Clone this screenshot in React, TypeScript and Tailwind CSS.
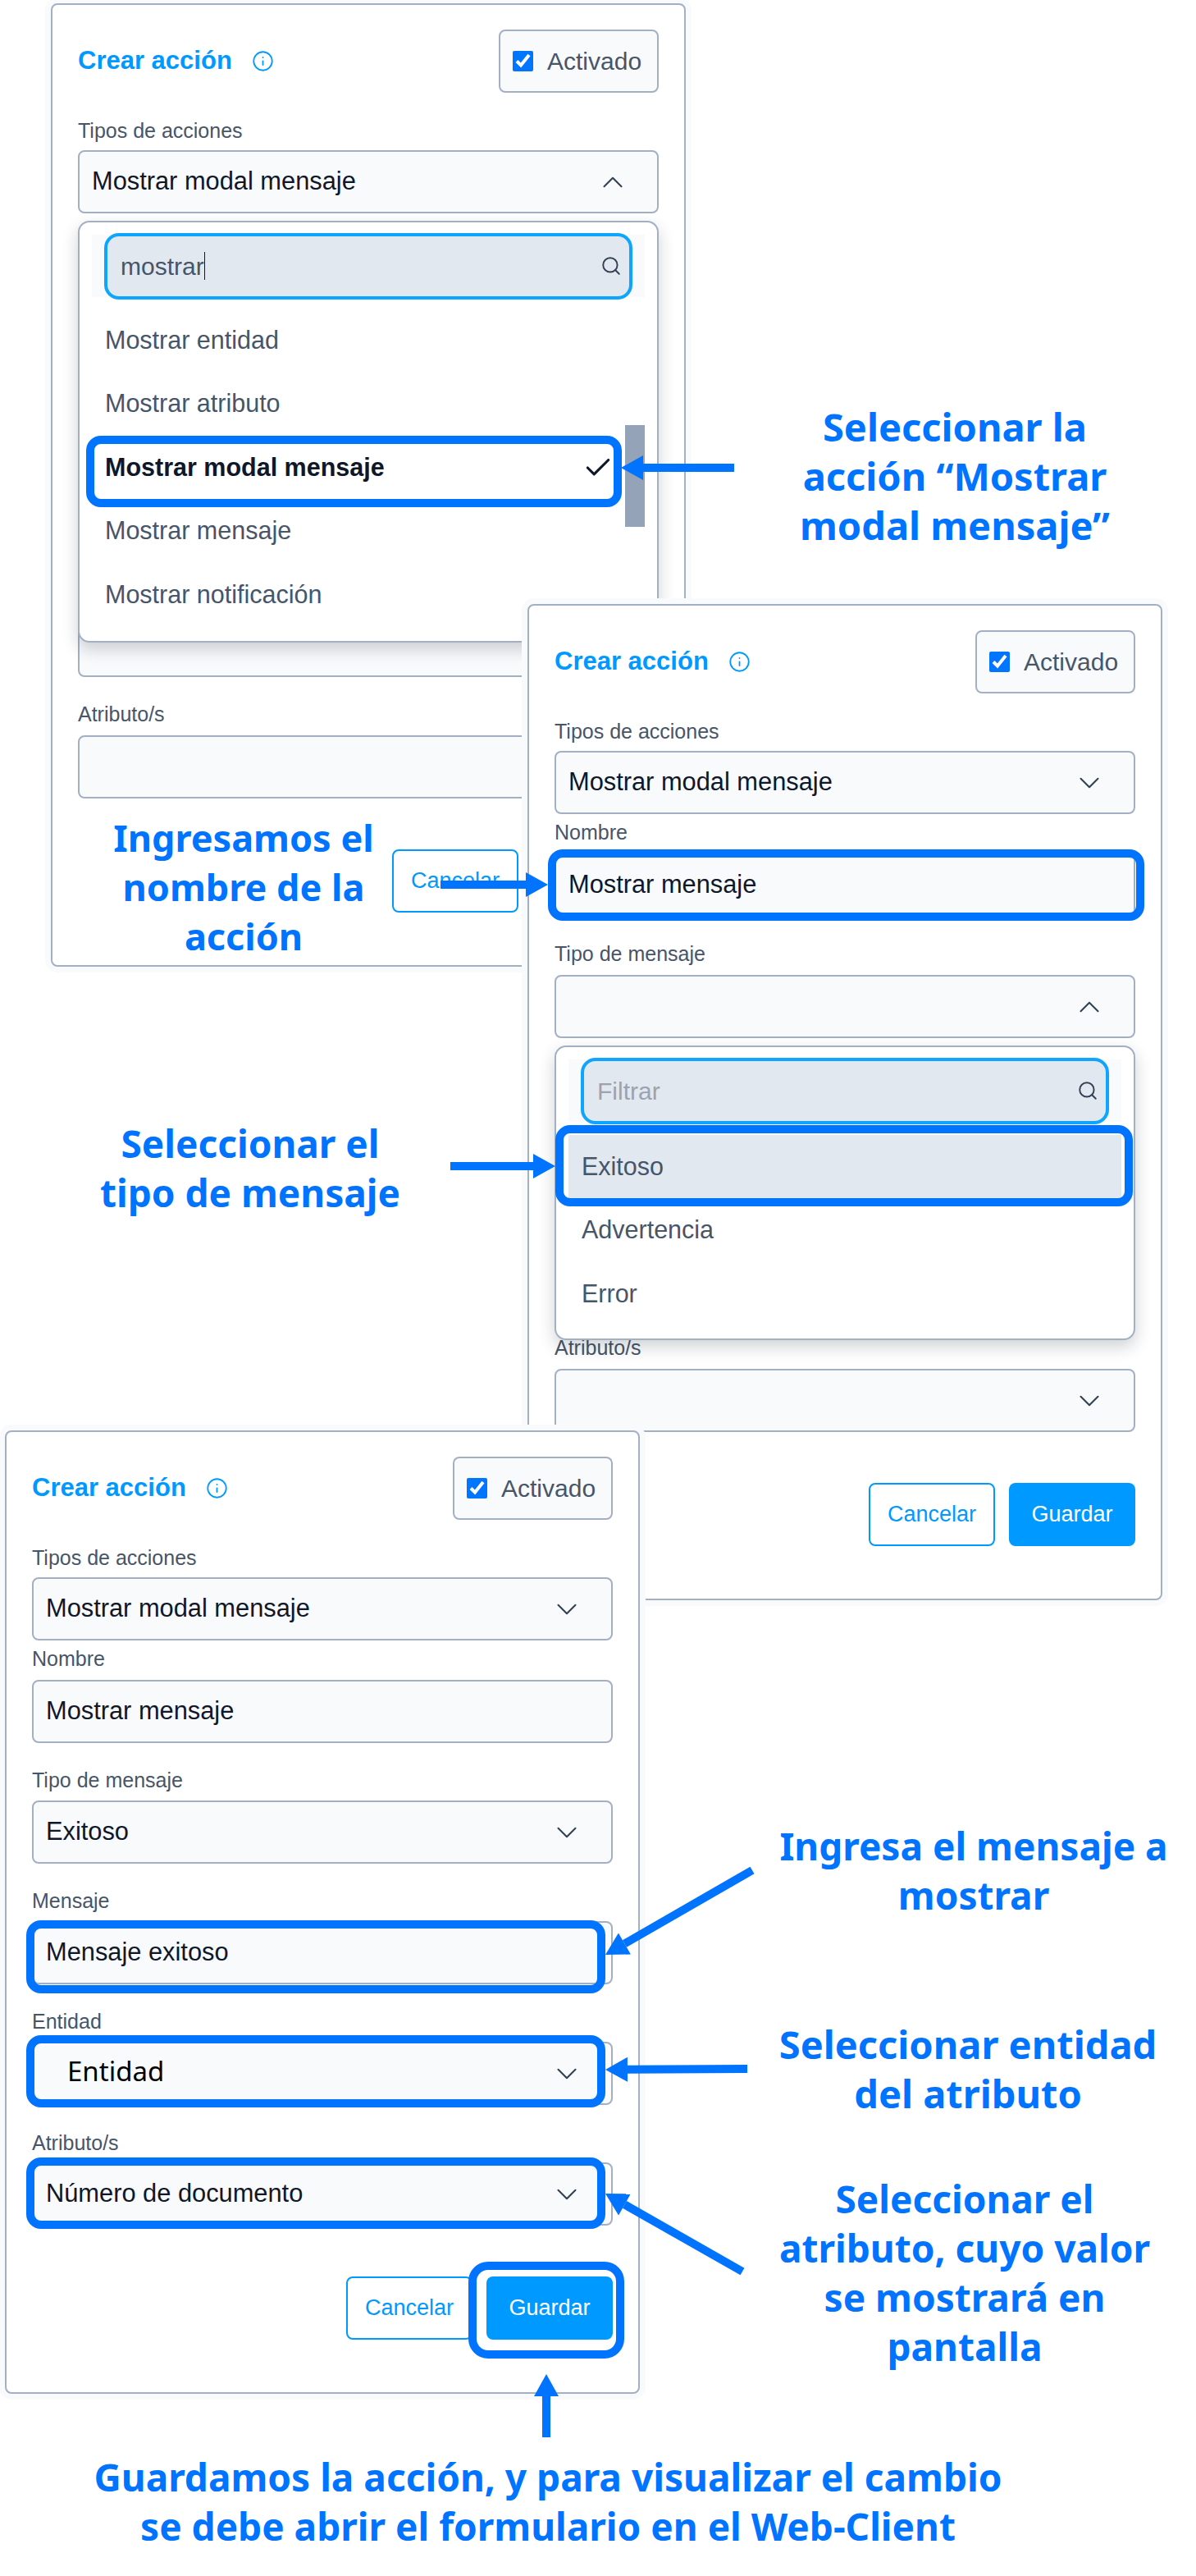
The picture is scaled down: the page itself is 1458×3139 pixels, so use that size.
import { Check, ChevronDown, ChevronUp, Info, Search } from "lucide-react";
import type { ReactNode } from "react";

function Field({ label, className = "mt-[34px]", labelClass = "mb-[13px]", children }: { label: string; className?: string; labelClass?: string; children: ReactNode }) {
    return (
        <div className={`relative ${className}`}>
            <div className={`h-6 flex items-center text-[25px] text-[#475569] ${labelClass}`}>{label}</div>
            {children}
        </div>
    );
}

function Box({ value, icon, valueClass = "" }: { value?: string; icon?: "up" | "down"; valueClass?: string }) {
    return (
        <div className="h-[77px] rounded-lg border-2 border-[#a3b0c4] bg-[#f8fafc] pl-[15px] pr-[33px] flex items-center justify-between text-[30.8px] text-[#0f172a]">
            <span className={valueClass}>{value}</span>
            {icon === "up" && <ChevronUp size={42} strokeWidth={1.2} className="text-[#334155]" />}
            {icon === "down" && <ChevronDown size={42} strokeWidth={1.2} className="text-[#334155]" />}
        </div>
    );
}

function Header() {
    return (
        <div className="h-[77px] flex items-center justify-between">
            <div className="flex items-center gap-6">
                <span className="text-[31px] font-bold text-[#0099ff]">Crear acción</span>
                <Info size={27} strokeWidth={1.6} className="text-[#0099ff]" />
            </div>
            <div className="w-[195px] h-full rounded-lg border-2 border-[#a3b0c4] bg-[#f8fafc] pl-[15px] flex items-center gap-[17px]">
                <input type="checkbox" checked readOnly className="w-[25px] h-[25px] accent-[#0075ff]" />
                <span className="text-[30px] text-[#475569]">Activado</span>
            </div>
        </div>
    );
}

function Buttons() {
    return (
        <div className="mt-[62px] flex justify-end gap-[17px]">
            <button className="w-[154px] h-[77px] rounded-lg border-2 border-[#0099ff] bg-white text-[27px] text-[#0099ff]">Cancelar</button>
            <button className="w-[154px] h-[77px] rounded-lg bg-[#0099ff] text-[27px] text-white">Guardar</button>
        </div>
    );
}

function Dropdown({ query, children }: { query?: string; children: ReactNode }) {
    return (
        <div className="absolute left-0 right-0 top-full mt-[9px] z-10 rounded-[14px] border-2 border-[#a3b0c4] bg-white pt-[15px] shadow-[0_8px_20px_rgba(15,23,42,0.2)]">
            <div className="mx-[15px] h-[76px] bg-[#f8fafc] px-[15px] flex items-center">
                <div className="w-full h-[81px] rounded-[18px] border-4 border-[#0ea5ff] bg-[#e2e8f0] pl-[16px] pr-[9px] flex items-center justify-between">
                    {query ? (
                        <span className="flex items-center text-[30px] text-[#475569]">
                            {query}
                            <span className="w-[1.5px] h-[34px] bg-[#0f172a]" />
                        </span>
                    ) : (
                        <span className="text-[30px] text-[#9ca3af]">Filtrar</span>
                    )}
                    <Search size={26} strokeWidth={1.8} className="text-[#334155]" />
                </div>
            </div>
            {children}
        </div>
    );
}

function Item({ text, className = "text-[#475569]", children }: { text: string; className?: string; children?: ReactNode }) {
    return (
        <div className={`mx-[15px] h-[77.5px] pl-4 pr-[38px] flex items-center justify-between text-[30.5px] ${className}`}>
            {text}
            {children}
        </div>
    );
}

function Panel({ className, children }: { className: string; children: ReactNode }) {
    return (
        <div className={`absolute w-[774px] rounded-lg border-2 border-[#a3b0c4] bg-white px-[31px] pt-[30px] pb-16 shadow-[0_0_0_7px_#f8fafc] ${className}`}>
            {children}
        </div>
    );
}

function Callout({ className, lines }: { className: string; lines: string[] }) {
    return (
        <div className={`absolute z-30 text-center text-[#0073ff] font-bold leading-[60px] font-['Noto_Sans',sans-serif] whitespace-nowrap ${className}`}>
            {lines.map((line) => (
                <div key={line}>{line}</div>
            ))}
        </div>
    );
}

function Arrow({ from, to }: { from: [number, number]; to: [number, number] }) {
    const dx = to[0] - from[0];
    const dy = to[1] - from[1];
    const len = Math.hypot(dx, dy);
    const ux = dx / len;
    const uy = dy / len;
    const bx = to[0] - ux * 27;
    const by = to[1] - uy * 27;
    const head = `${to[0]},${to[1]} ${bx - uy * 15},${by + ux * 15} ${bx + uy * 15},${by - ux * 15}`;
    return (
        <g>
            <line x1={from[0]} y1={from[1]} x2={bx} y2={by} stroke="#0073ff" strokeWidth={10} />
            <polygon points={head} fill="#0073ff" />
        </g>
    );
}

function Mark({ className }: { className: string }) {
    return <div className={`absolute z-30 border-[10px] border-[#0073ff] rounded-[18px] ${className}`} />;
}

export default function App() {
    return (
        <div className="relative w-[1458px] h-[3139px] bg-white overflow-hidden font-['Liberation_Sans',Arial,sans-serif]">
            {/* first form */}
            <Panel className="left-[62px] top-1 z-0">
                <Header />
                <Field label="Tipos de acciones" className="mt-[35px]" labelClass="mb-[11px]">
                    <Box value="Mostrar modal mensaje" icon="up" />
                    <Dropdown query="mostrar">
                        <div className="mt-[14px]">
                            <Item text="Mostrar entidad" />
                            <Item text="Mostrar atributo" />
                            <Item text="Mostrar modal mensaje" className="font-bold text-[#0f172a]">
                                <Check size={38} strokeWidth={2} className="text-[#0f172a]" />
                            </Item>
                            <Item text="Mostrar mensaje" />
                            <Item text="Mostrar notificación" />
                        </div>
                        <div className="h-[17px]" />
                        <div className="absolute left-[665px] top-[247px] w-6 h-[124px] bg-[#94a3b8]" />
                    </Dropdown>
                </Field>
                <div className="mt-[488px]">
                    <Box />
                </div>
                <Field label="Atributo/s">
                    <Box icon="down" />
                </Field>
                <Buttons />
            </Panel>

            {/* second form */}
            <Panel className="left-[643px] top-[736px] z-10">
                <Header />
                <Field label="Tipos de acciones" className="mt-[35px]" labelClass="mb-[11px]">
                    <Box value="Mostrar modal mensaje" icon="down" />
                </Field>
                <Field label="Nombre" className="mt-[11px]">
                    <Box value="Mostrar mensaje" />
                </Field>
                <Field label="Tipo de mensaje">
                    <Box icon="up" />
                    <Dropdown>
                        <div className="mt-4">
                            <Item text="Exitoso" className="bg-[#e2e8f0] text-[#475569]" />
                            <Item text="Advertencia" />
                            <Item text="Error" />
                        </div>
                        <div className="h-[15px]" />
                    </Dropdown>
                </Field>
                <Field label="Atributo/s" className="mt-[366px]">
                    <Box icon="down" />
                </Field>
                <Buttons />
            </Panel>

            {/* third form */}
            <Panel className="left-[6px] top-[1743px] z-20">
                <Header />
                <Field label="Tipos de acciones" className="mt-[35px]" labelClass="mb-[11px]">
                    <Box value="Mostrar modal mensaje" icon="down" />
                </Field>
                <Field label="Nombre" className="mt-[11px]">
                    <Box value="Mostrar mensaje" />
                </Field>
                <Field label="Tipo de mensaje" className="mt-[34px]" labelClass="mb-3">
                    <Box value="Exitoso" icon="down" />
                </Field>
                <Field label="Mensaje" className="mt-[34px]" labelClass="mb-3">
                    <Box value="Mensaje exitoso" />
                </Field>
                <Field label="Entidad" className="mt-[34px]" labelClass="mb-3">
                    <Box value="Entidad" icon="down" valueClass="ml-[26px] -mt-[5px] text-[33px] text-black font-['Noto_Sans',sans-serif]" />
                </Field>
                <Field label="Atributo/s" className="mt-[35px]" labelClass="mb-[11px]">
                    <Box value="Número de documento" icon="down" />
                </Field>
                <Buttons />
            </Panel>

            {/* annotations */}
            <Mark className="left-[105px] top-[531px] w-[653px] h-[87px]" />
            <Mark className="left-[668px] top-[1035px] w-[727px] h-[87px]" />
            <Mark className="left-[677px] top-[1371px] w-[704px] h-[99px]" />
            <Mark className="left-8 top-[2340px] w-[706px] h-[89px]" />
            <Mark className="left-8 top-[2480px] w-[706px] h-[88px]" />
            <Mark className="left-8 top-[2629px] w-[706px] h-[87px]" />
            <Mark className="left-[571px] top-[2756px] w-[190px] h-[118px] rounded-[24px]" />

            <svg className="absolute left-0 top-0 z-30" width={1458} height={3139}>
                <Arrow from={[895, 570]} to={[757, 570]} />
                <Arrow from={[537, 1078]} to={[668, 1078]} />
                <Arrow from={[549, 1421]} to={[677, 1421]} />
                <Arrow from={[917, 2279]} to={[738, 2382]} />
                <Arrow from={[911, 2521]} to={[738, 2522]} />
                <Arrow from={[905, 2768]} to={[738, 2673]} />
                <Arrow from={[666, 2970]} to={[666, 2893]} />
            </svg>

            <Callout className="left-[964px] w-[400px] top-[490px] text-[47px]" lines={["Seleccionar la", "acción “Mostrar", "modal mensaje”"]} />
            <Callout className="left-[97px] w-[400px] top-[991px] text-[45px]" lines={["Ingresamos el", "nombre de la", "acción"]} />
            <Callout className="left-[105px] w-[400px] top-[1363px] text-[46px]" lines={["Seleccionar el", "tipo de mensaje"]} />
            <Callout className="left-[937px] w-[500px] top-[2219px] text-[46px]" lines={["Ingresa el mensaje a", "mostrar"]} />
            <Callout className="left-[930px] w-[500px] top-[2461px] text-[47px]" lines={["Seleccionar entidad", "del atributo"]} />
            <Callout className="left-[926px] w-[500px] top-[2649px] text-[46px]" lines={["Seleccionar el", "atributo, cuyo valor", "se mostrará en", "pantalla"]} />
            <Callout className="left-[68px] w-[1200px] top-[2988px] text-[46px]" lines={["Guardamos la acción, y para visualizar el cambio", "se debe abrir el formulario en el Web-Client"]} />
        </div>
    );
}
